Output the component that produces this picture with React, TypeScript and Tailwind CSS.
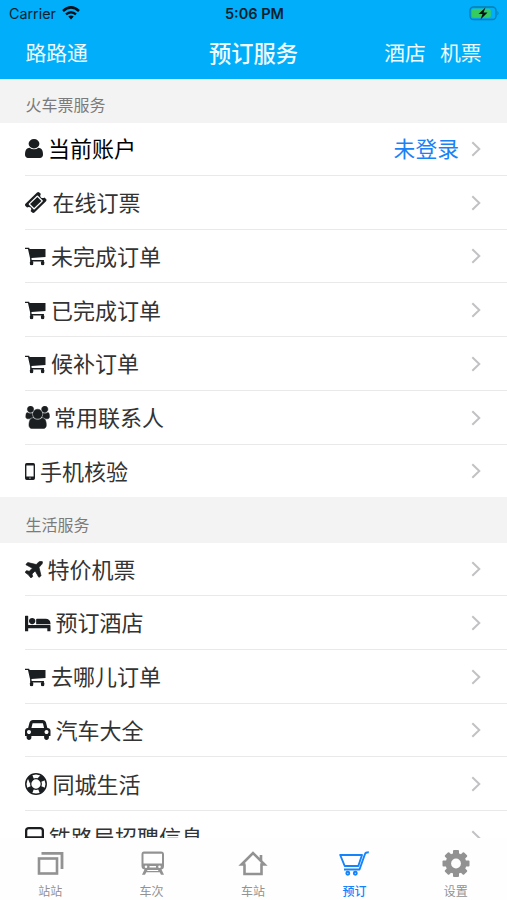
import React from "react";

type GlyphProps = { box: string; w: number; h: number; dy?: number; children: React.ReactNode };

function Glyph({ box, w, h, dy = 0, children }: GlyphProps) {
  return (
    <svg
      width={w}
      height={h}
      viewBox={box}
      preserveAspectRatio="none"
      fill="currentColor"
      className="shrink-0"
      style={{ transform: `translateY(${dy}px)` }}
    >
      {children}
    </svg>
  );
}

const User = () => (
  <Glyph box="256 128 1280 1536" w={18} h={19}>
    <path d="M1536 1399q0 109-62.5 187t-150.5 78h-854q-88 0-150.5-78t-62.5-187q0-85 8.5-160.5t31.5-152 58.5-131 94-89 134.5-34.5q131 128 313 128t313-128q76 0 134.5 34.5t94 89 58.5 131 31.5 152 8.5 160.5zm-256-887q0 159-112.5 271.5t-271.5 112.5-271.5-112.5-112.5-271.5 112.5-271.5 271.5-112.5 271.5 112.5 112.5 271.5z" />
  </Glyph>
);

const Ticket = () => (
  <Glyph box="54 54 1684 1685" w={21.5} h={21}>
    <path d="M1024 452l316 316-572 572-316-316zm-211 979l618-618q19-19 19-45t-19-45l-362-362q-18-18-45-18t-45 18l-618 618q-19 19-19 45t19 45l362 362q18 18 45 18t45-18zm889-637l-907 908q-37 37-90.5 37t-90.5-37l-126-125q56-56 56-136t-56-136-136-56-136 56l-125-126q-37-37-37-90.5t37-90.5l907-906q37-37 90.5-37t90.5 37l125 125q-56 56-56 136t56 136 136 56 136-56l126 125q37 37 37 90.5t-37 90.5z" />
  </Glyph>
);

const Cart = () => (
  <Glyph box="0 0 20 18" w={20.5} h={18} dy={0.5}>
    <path d="M0 0h4L4.500 1.500H20v8L6.300 10.600l.2 1.900H18.500V14H5V11L2.900 1.500H0z" />
    <rect x="4.800" y="13.500" width="3.200" height="4.200" rx="1.200" />
    <rect x="15.600" y="13.500" width="3.200" height="4.200" rx="1.200" />
  </Glyph>
);

const Group = () => (
  <Glyph box="0 0 1984 1792" w={24.5} h={22.5}>
    <g stroke="currentColor" strokeWidth="40">
      <path d="M657 896q-162 5-265 128h-134q-82 0-138-40.500t-56-118.500q0-353 124-353 6 0 43.500 21t97.500 42.500 119 21.500q67 0 133-23-5 37-5 66 0 139 81 256zm1071 637q0 120-73 189.500t-194 69.500h-874q-121 0-194-69.500t-73-189.500q0-53 3.500-103.500t14-109 26.500-108.500 43-97.500 62-81 85.500-53.500 111.500-20q10 0 43 21.500t73 48 107 48 135 21.500 135-21.500 107-48 73-48 43-21.500q61 0 111.500 20t85.500 53.500 62 81 43 97.500 26.500 108.500 14 109 3.500 103.500zm-1024-1277q0 106-75 181t-181 75-181-75-75-181 75-181 181-75 181 75 75 181zm704 384q0 159-112.500 271.500t-271.500 112.500-271.500-112.500-112.500-271.500 112.500-271.500 271.500-112.500 271.500 112.500 112.500 271.500zm576 225q0 78-56 118.500t-138 40.500h-134q-103-123-265-128 81-117 81-256 0-29-5-66 66 23 133 23 59 0 119-21.500t97.500-42.500 43.500-21q124 0 124 353zm-128-609q0 106-75 181t-181 75-181-75-75-181 75-181 181-75 181 75 75 181z" />
    </g>
  </Glyph>
);

const Phone = () => (
  <Glyph box="0 0 10 17" w={10} h={17}>
    <path
      fillRule="evenodd"
      d="M1.700 0h6.600Q10 0 10 1.700v13.600Q10 17 8.300 17H1.700Q0 17 0 15.300V1.700Q0 0 1.700 0zM1.400 2.500v11h7.200V2.500zM5 14.400a.7.700 0 1 0 0 1.400.7.700 0 1 0 0-1.400z"
    />
  </Glyph>
);

const Plane = () => (
  <Glyph box="182 122 1412 1416" w={17.5} h={17}>
    <path
      stroke="currentColor"
      strokeWidth="60"
      d="M1568 160q44 52 12 148t-108 172l-161 161 160 696q5 19-12 33l-128 96q-7 6-19 6-4 0-7-1-15-3-21-16l-279-508-259 259 53 194q5 17-8 31l-96 96q-9 9-23 9h-2q-15-2-24-13l-189-252-252-189q-11-7-13-23-1-13 9-25l96-97q9-9 23-9 6 0 8 1l194 53 259-259-508-279q-14-8-17-24-2-16 9-27l128-128q14-13 30-8l665 159 160-160q76-76 172-108t148 12z"
    />
  </Glyph>
);

const Bed = () => (
  <Glyph box="0 256 2048 1280" w={25.5} h={16} dy={0.5}>
    <path d="M256 1024h1728q26 0 45 19t19 45v448h-256v-256h-1536v256h-256v-1216q0-26 19-45t45-19h128q26 0 45 19t19 45v704zm576-320q0-106-75-181t-181-75-181 75-75 181 75 181 181 75 181-75 75-181zm1216 256v-64q0-159-112.500-271.500t-271.500-112.500h-704q-26 0-45 19t-19 45v384h1152z" />
  </Glyph>
);

const Car = () => (
  <Glyph box="0 128 2048 1600" w={25.5} h={20}>
    <path d="M480 1088q0-66-47-113t-113-47-113 47-47 113 47 113 113 47 113-47 47-113zm36-320h1016l-89-357q-2-8-14-17.500t-21-9.500h-768q-9 0-21 9.500t-14 17.500zm1372 320q0-66-47-113t-113-47-113 47-47 113 47 113 113 47 113-47 47-113zm160-96v384q0 14-9 23t-23 9h-96v128q0 80-56 136t-136 56-136-56-56-136v-128h-1024v128q0 80-56 136t-136 56-136-56-56-136v-128h-96q-14 0-23-9t-9-23v-384q0-93 65.500-158.500t158.500-65.500h28l105-419q23-94 104-157.500t179-63.500h768q98 0 179 63.500t104 157.500l105 419h28q93 0 158.500 65.500t65.500 158.500z" />
  </Glyph>
);

const Ring = () => (
  <Glyph box="0 0 22 22" w={22} h={22}>
    <g fill="none" stroke="currentColor">
      <circle cx="11" cy="11" r="10.200" strokeWidth="1.500" />
      <circle cx="11" cy="11" r="5.300" strokeWidth="1.300" />
      <circle
        cx="11"
        cy="11"
        r="7.700"
        strokeWidth="5"
        pathLength="8"
        strokeDasharray="1 1"
        transform="rotate(22.500 11 11)"
      />
    </g>
  </Glyph>
);

const Train = () => (
  <Glyph box="0 0 19 22" w={19} h={22}>
    <path
      fillRule="evenodd"
      d="M4 0h11q4 0 4 3.500V15q0 3-3.500 3.500l2 3.500h-2.500l-2-3H6l-2 3H1.500l2-3.500Q0 18 0 15V3.500Q0 0 4 0zM3.500 2.200q-1.200 0-1.200 1.500V9.300h14.400V3.700q0-1.500-1.200-1.500z"
    />
  </Glyph>
);

function Chevron() {
  return (
    <svg width="10" height="16" viewBox="0 0 10 16" fill="none" stroke="#c2c2c5" strokeWidth="2" className="shrink-0">
      <path d="M1.300 1.200 8.300 8l-7 6.800" />
    </svg>
  );
}

type Item = { label: string; icon: React.ReactNode; lead: string; value?: string };

const tickets: Item[] = [
  { label: "当前账户", icon: <User />, lead: "w-[23px]", value: "未登录" },
  { label: "在线订票", icon: <Ticket />, lead: "w-[27.500px]" },
  { label: "未完成订单", icon: <Cart />, lead: "w-[26px]" },
  { label: "已完成订单", icon: <Cart />, lead: "w-[26px]" },
  { label: "候补订单", icon: <Cart />, lead: "w-[26px]" },
  { label: "常用联系人", icon: <Group />, lead: "w-[29px]" },
  { label: "手机核验", icon: <Phone />, lead: "w-[15px]" },
];

const life: Item[] = [
  { label: "特价机票", icon: <Plane />, lead: "w-[22.500px]" },
  { label: "预订酒店", icon: <Bed />, lead: "w-[30.500px]" },
  { label: "去哪儿订单", icon: <Cart />, lead: "w-[26px]" },
  { label: "汽车大全", icon: <Car />, lead: "w-[30.500px]" },
  { label: "同城生活", icon: <Ring />, lead: "w-[27.500px]" },
  { label: "铁路局招聘信息", icon: <Train />, lead: "w-[24px]" },
];

function Section({ title, items }: { title: string; items: Item[] }) {
  return (
    <section className="shrink-0 not-first:-mt-px">
      <h2 className="relative flex h-[46px] items-center bg-[#f3f3f3] pt-[7px] pl-[25.500px] text-[16px] text-[#7b7b7b]">
        {title}
      </h2>
      <ul className="-mt-px">
        {items.map((item, i) => (
          <li key={item.label} className="flex h-[53.750px] pl-[25px]">
            <div
              className={
                "flex flex-1 items-center border-b pt-px pr-[26px] " +
                (i === items.length - 1 ? "border-transparent " : "border-[#e9e9e9] ") +
                (item.value ? "text-black" : "text-[#333333]")
              }
            >
              <span className={"flex shrink-0 items-center text-[#1b1e20] " + item.lead}>{item.icon}</span>
              <span className="pb-[3px] text-[22px] whitespace-nowrap">{item.label}</span>
              <span className="mr-[12px] ml-auto pb-[2px] text-[21.800px] text-[#1b82f5]">{item.value}</span>
              <Chevron />
            </div>
          </li>
        ))}
      </ul>
    </section>
  );
}

const tabs = [
  {
    label: "站站",
    icon: (
      <g fill="none" stroke="currentColor">
        <rect x="5" y="10.500" width="18" height="15" strokeWidth="2.600" />
        <path d="M7.500 5.300h20.500v15.700" strokeWidth="2.800" />
      </g>
    ),
  },
  {
    label: "车次",
    icon: (
      <path
        fill="currentColor"
        fillRule="evenodd"
        d="M8 3.500h17q3 0 3 3v11.500q0 3-2.500 3.500l2.500 5.300h-3l-1.300-2.500h-13.400l-1.300 2.500h-3l2.500-5.300Q5.500 21 5.500 18V6.500q0-3 2.500-3zM7.500 5.800v9.700h18.500v-9.700zM10 17.500a1.300 1.300 0 1 0 0 2.600 1.300 1.300 0 1 0 0-2.600zm13.500 0a1.300 1.300 0 1 0 0 2.600 1.300 1.300 0 1 0 0-2.600zM13.500 18v1.500h6.500v-1.500zM11.500 22l-.5 1h11.500l-.5-1z"
      />
    ),
  },
  {
    label: "车站",
    icon: (
      <path
        fill="none"
        stroke="currentColor"
        strokeWidth="2.600"
        d="M7.500 16.500v9.500h17v-9.500h3L16 5 4.500 16.500h4M24 12.500V7"
      />
    ),
  },
  {
    label: "预订",
    icon: (
      <g fill="none" stroke="currentColor" strokeWidth="1.900" strokeLinejoin="round">
        <path d="M2.200 7h21.800l-3.700 11h-13.600zM6 21.500h15.500l5.500-15.500q.7-1.800 3.800-1.800" />
        <circle cx="9.800" cy="25.300" r="1.500" />
        <circle cx="17.300" cy="25.300" r="1.500" />
      </g>
    ),
  },
  {
    label: "设置",
    icon: (
      <g>
        <g fill="currentColor">
          <rect x="13" y="2" width="6" height="27" rx="1" />
          <rect x="13" y="2" width="6" height="27" rx="1" transform="rotate(45 16 15.500)" />
          <rect x="13" y="2" width="6" height="27" rx="1" transform="rotate(90 16 15.500)" />
          <rect x="13" y="2" width="6" height="27" rx="1" transform="rotate(135 16 15.500)" />
        </g>
        <circle cx="16" cy="15.500" r="8" fill="none" stroke="currentColor" strokeWidth="5" />
        <circle cx="16" cy="15.500" r="4.900" fill="#fefefe" />
      </g>
    ),
  },
];

export default function App() {
  return (
    <div className="flex h-[900px] w-[507px] flex-col overflow-hidden bg-white font-['Noto_Sans_CJK_SC',sans-serif] leading-none">
      <header className="relative z-10 h-[79px] shrink-0 bg-[#00aefa]">
        <div className="grid h-[27px] grid-cols-3 items-center pr-[7px] pl-[9px] font-['Inter','Liberation_Sans',sans-serif] text-[#07222e]">
          <div className="flex items-center gap-[6px]">
            <span className="pt-px text-[14.300px]">Carrier</span>
            <svg width="18" height="14" viewBox="0 0 18 14" fill="none" stroke="#001018" strokeWidth="2.500">
              <path d="M1 5q8-7.200 16 0M4 8.400q5-4.400 10 0" />
              <path d="M6.300 10.600q2.700-2.200 5.400 0L9 13.600z" fill="#001018" stroke="none" />
            </svg>
          </div>
          <span className="pt-px text-center text-[14.500px] font-semibold whitespace-nowrap">5:06 PM</span>
          <svg width="31" height="15" viewBox="0 0 31 15" className="justify-self-end">
            <rect x="1" y="1" width="26" height="12.500" rx="3.500" fill="none" stroke="#087daf" strokeWidth="1.300" />
            <rect x="2.800" y="2.800" width="19" height="9" rx="2" fill="#35cb61" />
            <path d="M28.500 5q2 2.200 0 4.500z" fill="#087daf" />
            <path d="M16.500 1.500 9.500 8h4l-2 5.500 7-7h-4z" fill="#001018" />
          </svg>
        </div>
        <nav className="grid h-[51px] grid-cols-3 items-center px-[25.500px] text-[20.800px] text-[#f0fbff]">
          <span>路路通</span>
          <h1 className="text-center text-[22.300px] font-medium whitespace-nowrap">预订服务</h1>
          <div className="flex justify-end gap-[14px]">
            <span>酒店</span>
            <span>机票</span>
          </div>
        </nav>
      </header>
      <main className="-mt-[2px] flex h-[761px] shrink-0 flex-col overflow-hidden">
        <Section title="火车票服务" items={tickets} />
        <Section title="生活服务" items={life} />
      </main>
      <footer className="grid flex-1 grid-cols-5 bg-[#fefefe]">
        {tabs.map((tab) => (
          <div
            key={tab.label}
            className={
              "flex flex-col items-center pt-[10px] " + (tab.label === "预订" ? "text-[#1583fa]" : "text-[#929292]")
            }
          >
            <svg width="32" height="31" viewBox="0 0 32 31" className="-ml-px shrink-0">
              {tab.icon}
            </svg>
            <span className={"-ml-px mt-[5.500px] text-[12px] " + (tab.label === "预订" ? "font-medium" : "")}>
              {tab.label}
            </span>
          </div>
        ))}
      </footer>
    </div>
  );
}
